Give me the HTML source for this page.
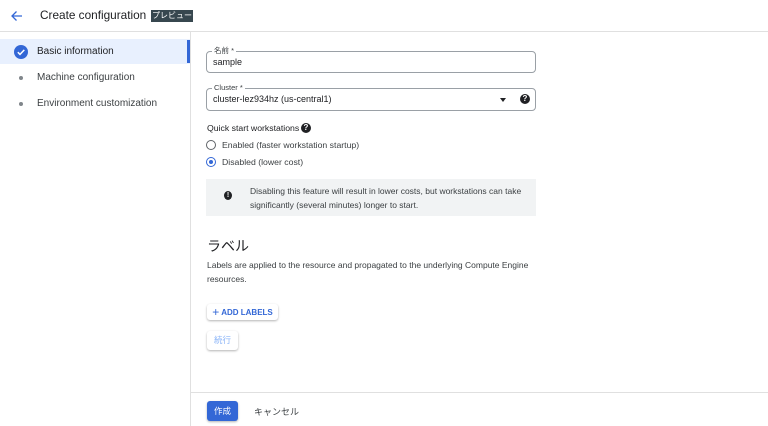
<!DOCTYPE html>
<html><head><meta charset="utf-8"><style>
*{box-sizing:border-box;margin:0;padding:0}
body{width:768px;height:426px;overflow:hidden;background:#fff;font-family:"Liberation Sans","Noto Sans CJK JP",sans-serif;color:#202124;position:relative}
.abs{position:absolute}
.hdr{left:0;top:0;width:768px;height:32px;border-bottom:1px solid #e0e0e0}
.side{left:0;top:32px;width:191px;height:394px;border-right:1px solid #e0e0e0}
.item{position:absolute;left:0;width:190px;height:25px;font-size:10px;line-height:25px;padding-left:37px;color:#3c4043}
.dot{position:absolute;left:19px;top:11px;width:4px;height:4px;border-radius:50%;background:#80868b}
.field{border:1px solid #9aa0a6;border-radius:4px;height:22px;width:330px;left:206px;font-size:9px;padding-left:6px;line-height:20px}
.lbl{position:absolute;top:-6px;left:5px;background:#fff;padding:0 2px;font-size:7.5px;line-height:10px;color:#3c4043}
.t9{font-size:8.7px;color:#3c4043}
.radio{width:10px;height:10px;border-radius:50%;border:1.2px solid #5f6368}
.btn{border-radius:3px;box-shadow:0 1px 2px rgba(0,0,0,.3);background:#fff;font-size:8.5px;text-align:center}
</style></head><body>
<div class="abs hdr"></div>
<svg class="abs" style="left:10px;top:10px" width="13" height="12" viewBox="0 0 13 12"><path d="M12 6H2M6.5 1.5L2 6l4.5 4.5" stroke="#3367d6" stroke-width="1.3" fill="none"/></svg>
<div class="abs" style="left:40px;top:8px;font-size:11.8px;color:#202124">Create configuration</div>
<div class="abs" style="left:151px;top:10px;height:12px;width:42px;background:#37474f;color:#fff;font-size:8px;line-height:12px;text-align:center">プレビュー</div>
<div class="abs side"></div>
<div class="item" style="top:39px;background:#e8f0fe;color:#202124">Basic information</div>
<div class="abs" style="left:187px;top:40px;width:3px;height:23px;background:#3367d6"></div>
<svg class="abs" style="left:14px;top:45px" width="14" height="14" viewBox="0 0 14 14"><circle cx="7" cy="7" r="7" fill="#3367d6"/><path d="M3.8 7.2l2.2 2.2 4.3-4.5" stroke="#fff" stroke-width="1.5" fill="none"/></svg>
<div class="item" style="top:65px">Machine configuration<div class="dot"></div></div>
<div class="item" style="top:91px">Environment customization<div class="dot"></div></div>

<div class="abs field" style="top:51px">sample<div class="lbl">名前 *</div></div>
<div class="abs field" style="top:88px;height:23px;line-height:21px">cluster-lez934hz (us-central1)<div class="lbl">Cluster *</div>
<div class="abs" style="left:293px;top:9px;width:0;height:0;border-left:3px solid transparent;border-right:3px solid transparent;border-top:4px solid #202124"></div>
<div class="abs" style="left:313px;top:5px;width:10px;height:10px;border-radius:50%;background:#202124;color:#fff;font-size:8px;line-height:10px;text-align:center;font-weight:bold">?</div></div>
<div class="abs t9" style="left:207px;top:123px;color:#202124">Quick start workstations</div>
<div class="abs" style="left:301px;top:123px;width:10px;height:10px;border-radius:50%;background:#202124;color:#fff;font-size:8px;line-height:10px;text-align:center;font-weight:bold">?</div>
<div class="abs radio" style="left:206px;top:140px"></div>
<div class="abs t9" style="left:222px;top:140px">Enabled (faster workstation startup)</div>
<div class="abs radio" style="left:206px;top:157px;border-color:#3367d6"><div style="margin:1.8px;width:4.5px;height:4.5px;border-radius:50%;background:#3367d6"></div></div>
<div class="abs t9" style="left:222px;top:157px">Disabled (lower cost)</div>
<div class="abs" style="left:206px;top:179px;width:330px;height:37px;background:#f1f3f4"></div>
<div class="abs" style="left:224px;top:191px;width:8px;height:9px;border-radius:50%;background:#202124;color:#fff;font-size:7px;line-height:9px;text-align:center;font-weight:bold">!</div>
<div class="abs" style="left:250px;top:184px;font-size:8.5px;line-height:14px;color:#3c4043;width:285px">Disabling this feature will result in lower costs, but workstations can take significantly (several minutes) longer to start.</div>
<div class="abs" style="left:207px;top:236px;font-size:14px;color:#202124">ラベル</div>
<div class="abs" style="left:207px;top:259px;font-size:8.5px;line-height:13.5px;color:#3c4043;width:330px">Labels are applied to the resource and propagated to the underlying Compute Engine resources.</div>
<div class="abs btn" style="left:207px;top:304px;width:71px;height:16px;line-height:16px;color:#3367d6;font-weight:bold;font-size:8px"><span style="font-size:12px;font-weight:normal;vertical-align:-1px">+</span> ADD LABELS</div>
<div class="abs btn" style="left:207px;top:331px;width:31px;height:19px;line-height:19px;color:#8ab4f8">続行</div>
<div class="abs" style="left:191px;top:392px;width:577px;height:1px;background:#e0e0e0"></div>
<div class="abs btn" style="left:207px;top:401px;width:31px;height:20px;line-height:20px;background:#3367d6;color:#fff">作成</div>
<div class="abs" style="left:254px;top:405px;font-size:9px;color:#3c4043">キャンセル</div>
</body></html>
